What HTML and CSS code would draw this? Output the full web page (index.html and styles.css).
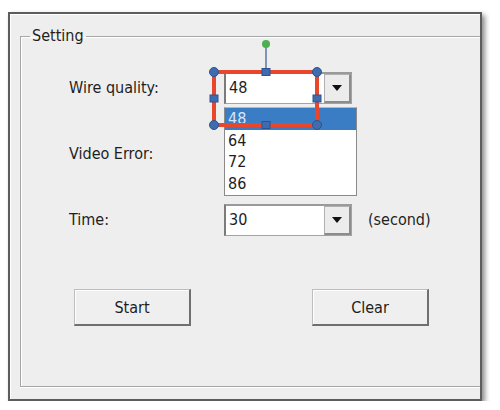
FILE: index.html
```html
<!DOCTYPE html>
<html>
<head>
<meta charset="utf-8">
<link rel="stylesheet" href="styles.css">
</head>
<body>
<div class="window">
  <fieldset class="group">
    <legend class="legend">Setting</legend>
    <div class="form">
      <div class="label">Wire quality:</div>
      <div class="combo combo-open">
        <div class="field">48</div>
        <div class="drop"><span class="tri"></span></div>
        <ul class="list">
          <li class="item selected">48</li>
          <li class="item">64</li>
          <li class="item">72</li>
          <li class="item">86</li>
        </ul>
        <svg class="selection" width="125" height="100" viewBox="0 0 125 100">
          <line x1="61" y1="12" x2="61" y2="37" stroke="#5b76a8" stroke-width="1.5"/>
          <circle cx="61" cy="9" r="4" fill="#4caf50"/>
          <rect x="9" y="37" width="103" height="53" fill="none" stroke="#e8472b" stroke-width="4"/>
          <g fill="#3f6cae" stroke="#2c5391" stroke-width="1">
            <circle cx="9" cy="37" r="4.5"/>
            <circle cx="112" cy="37" r="4.5"/>
            <circle cx="9" cy="90" r="4.5"/>
            <circle cx="112" cy="90" r="4.5"/>
            <rect x="57" y="33.5" width="8" height="7"/>
            <rect x="57" y="86.5" width="8" height="7"/>
            <rect x="5" y="60" width="8" height="7"/>
            <rect x="108" y="60" width="8" height="7"/>
          </g>
        </svg>
      </div>
      <div class="unit"></div>

      <div class="label">Video Error:</div>
      <div class="combo">
        <div class="field"></div>
        <div class="drop"><span class="tri"></span></div>
      </div>
      <div class="unit"></div>

      <div class="label">Time:</div>
      <div class="combo">
        <div class="field">30</div>
        <div class="drop"><span class="tri"></span></div>
      </div>
      <div class="unit">(second)</div>
    </div>
    <div class="buttons">
      <button class="btn">Start</button>
      <button class="btn">Clear</button>
    </div>
  </fieldset>
</div>
</body>
</html>
```

FILE: styles.css
```css
html, body {
  margin: 0;
  padding: 0;
  background: #ffffff;
}

body {
  font-family: "DejaVu Sans Condensed", "DejaVu Sans", sans-serif;
  font-size: 16px;
  color: #1e1e1e;
}

.window {
  box-sizing: border-box;
  margin: 12px 0 0 8px;
  width: 474px;
  height: 389px;
  border: 2px solid #5c5c5c;
  background: #eeeeee;
  box-shadow: 3px 3px 5px rgba(0, 0, 0, 0.45), inset 1px 1px 0 #ffffff;
  padding: 13px 0 0 10px;
}

.group {
  box-sizing: border-box;
  margin: 0;
  padding: 0;
  width: 460px;
  height: 360px;
  border: 1px solid #a6a6a6;
  border-right: none;
  box-shadow: inset 1px 1px 0 #ffffff, 0 1px 0 #ffffff;
}

.legend {
  margin-left: 9px;
  padding: 0 2px;
  line-height: 18px;
}

.form {
  display: grid;
  grid-template-columns: 155px 128px auto;
  grid-template-rows: 32px 32px 32px;
  row-gap: 34px;
  align-items: center;
  padding: 27px 0 0 48px;
}

.label {
  line-height: 18px;
}

.combo {
  position: relative;
  box-sizing: border-box;
  height: 32px;
  display: flex;
  border: 1px solid #a3a3a3;
  border-left: 2px solid #7b7b7b;
  border-top: 2px solid #9a9a9a;
  background: #ffffff;
}

.field {
  flex: 1;
  padding-left: 3px;
  line-height: 28px;
}

.drop {
  box-sizing: border-box;
  width: 27px;
  height: 100%;
  background: #ececec;
  border: 1px solid #b0b0b0;
  border-right: 2px solid #8c8c8c;
  border-bottom: 2px solid #8c8c8c;
  display: flex;
  align-items: center;
  justify-content: center;
}

.tri {
  width: 0;
  height: 0;
  border-left: 5px solid transparent;
  border-right: 5px solid transparent;
  border-top: 6px solid #111111;
}

.unit {
  padding-left: 16px;
  line-height: 18px;
}

.list {
  position: absolute;
  z-index: 2;
  left: -2px;
  top: 33px;
  box-sizing: border-box;
  width: 133px;
  height: 89px;
  margin: 0;
  padding: 0;
  list-style: none;
  background: #ffffff;
  border: 1px solid #8a8a8a;
  border-top: 1px solid #b8b8b8;
}

.item {
  height: 21.5px;
  line-height: 21.5px;
  padding-left: 3px;
}

.item.selected {
  background: #3b7dc4;
  color: #d8e6f6;
}

.selection {
  position: absolute;
  z-index: 3;
  left: -21px;
  top: -39px;
  overflow: visible;
}

.buttons {
  display: flex;
  gap: 121px;
  padding: 53px 0 0 53px;
}

.btn {
  box-sizing: border-box;
  width: 117px;
  height: 37px;
  font-family: "DejaVu Sans Condensed", "DejaVu Sans", sans-serif;
  font-size: 16px;
  color: #1e1e1e;
  background: #efefef;
  border: 1px solid #bdbdbd;
  border-right: 2px solid #6f6f6f;
  border-bottom: 2px solid #6f6f6f;
  box-shadow: inset 1px 1px 0 #ffffff;
  padding: 0;
}
```
